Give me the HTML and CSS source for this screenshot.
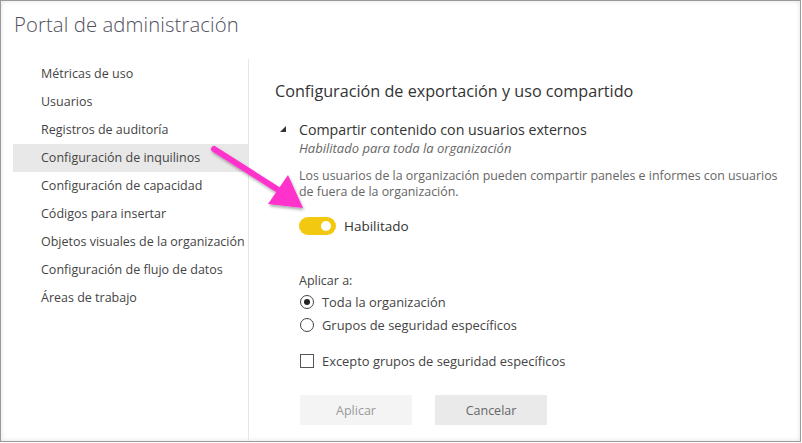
FILE: index.html
```html
<!DOCTYPE html>
<html lang="es">
<head>
<meta charset="utf-8">
<title>Portal de administración</title>
<link rel="stylesheet" href="styles.css">
</head>
<body>
<div class="frame">
  <header class="header">Portal de administración</header>
  <div class="body">
    <nav class="nav">
      <div class="nav-item">Métricas de uso</div>
      <div class="nav-item">Usuarios</div>
      <div class="nav-item">Registros de auditoría</div>
      <div class="nav-item active">Configuración de inquilinos</div>
      <div class="nav-item">Configuración de capacidad</div>
      <div class="nav-item">Códigos para insertar</div>
      <div class="nav-item">Objetos visuales de la organización</div>
      <div class="nav-item">Configuración de flujo de datos</div>
      <div class="nav-item">Áreas de trabajo</div>
    </nav>
    <main class="main">
      <h1 class="section-title">Configuración de exportación y uso compartido</h1>
      <div class="setting">
        <div class="setting-head">
          <span class="caret"></span>
          <span class="setting-name">Compartir contenido con usuarios externos</span>
        </div>
        <div class="setting-body">
          <div class="setting-status">Habilitado para toda la organización</div>
          <p class="setting-desc">Los usuarios de la organización pueden compartir paneles e informes con usuarios de fuera de la organización.</p>
          <div class="toggle-row">
            <span class="toggle"><span class="knob"></span></span>
            <span class="toggle-label">Habilitado</span>
          </div>
          <div class="apply-label">Aplicar a:</div>
          <div class="option"><span class="radio checked"></span>Toda la organización</div>
          <div class="option"><span class="radio"></span>Grupos de seguridad específicos</div>
          <div class="option check-option"><span class="checkbox"></span>Excepto grupos de seguridad específicos</div>
          <div class="buttons">
            <button class="btn btn-disabled">Aplicar</button>
            <button class="btn">Cancelar</button>
          </div>
        </div>
      </div>
    </main>
  </div>
  <svg class="arrow" width="110" height="85" viewBox="0 0 110 85">
    <defs>
      <filter id="sh" x="-20%" y="-20%" width="140%" height="140%">
        <feDropShadow dx="1" dy="2" stdDeviation="1.5" flood-color="#000" flood-opacity="0.35"/>
      </filter>
    </defs>
    <g filter="url(#sh)">
      <line x1="14" y1="14" x2="80" y2="56" stroke="#ff33cc" stroke-width="6" stroke-linecap="round"/>
      <polygon points="103,73 68,69 88,40" fill="#ff33cc"/>
    </g>
  </svg>
</div>
</body>
</html>
```

FILE: styles.css
```css
* { box-sizing: border-box; }
html, body { margin: 0; padding: 0; background: #fff; }
body {
  font-family: "Open Sans", "Noto Sans", sans-serif;
  color: #444;
}
.frame {
  position: relative;
  width: 801px;
  height: 442px;
  border: 1px solid #9a9a9a;
  box-shadow: inset 0 0 5px rgba(0,0,0,0.12);
  overflow: hidden;
  display: flex;
  flex-direction: column;
}
.header {
  font-size: 20.3px;
  font-weight: 300;
  color: #50505c;
  padding: 9px 0 0 13px;
  height: 58px;
  letter-spacing: 0.1px;
}
.body {
  display: flex;
  flex: 1;
}
.nav {
  width: 236px;
  margin-left: 12px;
  border-right: 1px solid #e6e6e6;
  padding-top: 1px;
}
.nav-item {
  height: 28px;
  line-height: 28px;
  padding-left: 28px;
  font-size: 12.5px;
  color: #444;
  white-space: nowrap;
}
.nav-item.active { background: #e8e8e8; }
.main {
  flex: 1;
  padding: 20px 0 0 26px;
}
.section-title {
  margin: 0;
  font-size: 16.2px;
  font-weight: 400;
  color: #333;
  line-height: 24px;
}
.setting { margin-top: 16px; }
.setting-head {
  display: flex;
  align-items: center;
  height: 20px;
}
.caret {
  width: 0; height: 0;
  border-left: 6px solid transparent;
  border-bottom: 6px solid #333;
  margin: 0 13px 0 5px;
}
.setting-name {
  font-size: 14.2px;
  color: #333;
}
.setting-body { padding-left: 24px; }
.setting-status {
  font-size: 13px;
  font-style: italic;
  color: #666;
  line-height: 18px;
}
.setting-desc {
  margin: 11px 0 0;
  font-size: 12.4px;
  color: #666;
  line-height: 16px;
  width: 490px;
}
.toggle-row {
  display: flex;
  align-items: center;
  margin-top: 17px;
  height: 18px;
}
.toggle {
  width: 37px; height: 18px;
  border-radius: 9px;
  background: #f2c811;
  position: relative;
  margin-right: 8px;
}
.knob {
  position: absolute;
  right: 5px; top: 4px;
  width: 10px; height: 10px;
  border-radius: 50%;
  background: #fff;
}
.toggle-label { font-size: 13.5px; color: #333; }
.apply-label {
  margin-top: 36px;
  font-size: 12.5px;
  color: #444;
  line-height: 19px;
}
.option {
  display: flex;
  align-items: center;
  font-size: 12.9px;
  color: #444;
  height: 23px;
}
.check-option { margin-top: 13px; }
.radio {
  width: 14px; height: 14px;
  border: 1px solid #444;
  border-radius: 50%;
  margin: 0 8px 0 1px;
  display: flex;
  align-items: center;
  justify-content: center;
}
.radio.checked::after {
  content: "";
  width: 6px; height: 6px;
  border-radius: 50%;
  background: #222;
}
.checkbox {
  width: 14px; height: 14px;
  border: 1px solid #555;
  margin: 0 8px 0 1px;
}
.buttons {
  display: flex;
  gap: 23px;
  margin-top: 23px;
  padding-left: 1px;
}
.btn {
  width: 112px; height: 30px;
  border: none;
  background: #eaeaea;
  font-family: inherit;
  font-size: 12.5px;
  color: #666;
}
.btn-disabled { background: #f4f4f4; color: #9a9a9a; }
.arrow {
  position: absolute;
  left: 199px;
  top: 134px;
}
```
